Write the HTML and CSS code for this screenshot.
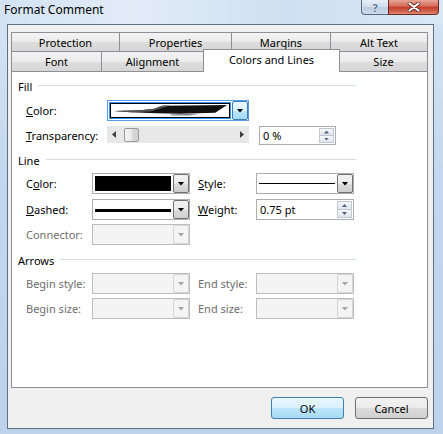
FILE: index.html
```html
<!DOCTYPE html>
<html>
<head>
<meta charset="utf-8">
<title>Format Comment</title>
<link rel="stylesheet" href="styles.css">
</head>
<body>
<div class="window">
  <div class="titlebar">
    <div class="title">Format Comment</div>
    <div class="caption-btns">
      <div class="cap help">?</div>
      <div class="cap close">
        <svg width="14" height="10" viewBox="0 0 14 10"><path d="M2.5 1.5 L11.5 8.5 M11.5 1.5 L2.5 8.5" stroke="#5a1f1a" stroke-width="3.6" stroke-linecap="round"/><path d="M2.5 1.5 L11.5 8.5 M11.5 1.5 L2.5 8.5" stroke="#fff" stroke-width="2.2" stroke-linecap="round"/></svg>
      </div>
    </div>
  </div>

  <div class="client">
    <div class="tabs">
      <div class="tabrow row1">
        <div class="tab t-protection">Protection</div>
        <div class="tab t-properties">Properties</div>
        <div class="tab t-margins">Margins</div>
        <div class="tab t-alttext">Alt Text</div>
      </div>
      <div class="tabrow row2">
        <div class="tab t-font">Font</div>
        <div class="tab t-alignment">Alignment</div>
        <div class="tab t-colors selected">Colors and Lines</div>
        <div class="tab t-size">Size</div>
      </div>
    </div>

    <div class="panel">
      <div class="group g-fill">
        <div class="ghead"><span>Fill</span><i class="rule"></i></div>
        <div class="row r-fcolor">
          <span class="lbl lbl-fill"><u>C</u>olor:</span>
          <div class="combo combo-fill focus">
            <div class="val">
              <div class="swatch">
                <svg width="120" height="14" viewBox="0 0 120 14" preserveAspectRatio="none">
                  <polygon points="3,7.5 30,6.8 44,5 52,2 118,1 106,9.5 70,10.5 46,10 20,9" fill="#111"/>
                  <polygon points="3,7.5 30,6.8 44,5 52,2 60,1.6 40,8 20,9" fill="#555"/>
                  <polygon points="60,11 90,10.5 80,12.5 62,12.5" fill="#888"/>
                </svg>
              </div>
            </div>
            <div class="dd"></div>
          </div>
        </div>
        <div class="row r-trans">
          <span class="lbl lbl-fill"><u>T</u>ransparency:</span>
          <div class="slider">
            <i class="sarrow left"></i>
            <i class="thumb"></i>
            <i class="spacer"></i>
            <i class="sarrow right"></i>
          </div>
          <div class="spin spin-pct">
            <span class="sval">0 %</span>
            <div class="spinbtns"><b class="up"></b><b class="down"></b></div>
          </div>
        </div>
      </div>

      <div class="group g-line">
        <div class="ghead"><span>Line</span><i class="rule"></i></div>
        <div class="row r-lcolor">
          <span class="lbl">C<u>o</u>lor:</span>
          <div class="combo">
            <div class="val"><div class="blackbox"></div></div>
            <div class="dd"></div>
          </div>
          <span class="lbl lbl2"><u>S</u>tyle:</span>
          <div class="combo">
            <div class="val"><div class="stroke thin"></div></div>
            <div class="dd"></div>
          </div>
        </div>
        <div class="row r-dashed">
          <span class="lbl"><u>D</u>ashed:</span>
          <div class="combo">
            <div class="val"><div class="stroke thick"></div></div>
            <div class="dd"></div>
          </div>
          <span class="lbl lbl2"><u>W</u>eight:</span>
          <div class="spin spin-weight">
            <span class="sval">0.75 pt</span>
            <div class="spinbtns"><b class="up"></b><b class="down"></b></div>
          </div>
        </div>
        <div class="row r-connector">
          <span class="lbl disabled">Connector:</span>
          <div class="combo disabled">
            <div class="val"></div>
            <div class="dd"></div>
          </div>
        </div>
      </div>

      <div class="group g-arrows">
        <div class="ghead"><span>Arrows</span><i class="rule"></i></div>
        <div class="row r-bstyle">
          <span class="lbl disabled">Begin style:</span>
          <div class="combo disabled"><div class="val"></div><div class="dd"></div></div>
          <span class="lbl lbl2 disabled">End style:</span>
          <div class="combo disabled"><div class="val"></div><div class="dd"></div></div>
        </div>
        <div class="row r-bsize">
          <span class="lbl disabled">Begin size:</span>
          <div class="combo disabled"><div class="val"></div><div class="dd"></div></div>
          <span class="lbl lbl2 disabled">End size:</span>
          <div class="combo disabled"><div class="val"></div><div class="dd"></div></div>
        </div>
      </div>
    </div>

    <div class="buttons">
      <div class="btn default">OK</div>
      <div class="btn">Cancel</div>
    </div>
  </div>
</div>
</body>
</html>
```

FILE: styles.css
```css
* { box-sizing: border-box; }

html, body {
  margin: 0;
  padding: 0;
}

body {
  width: 443px;
  height: 434px;
  overflow: hidden;
  font-family: "Noto Sans", "Open Sans", sans-serif;
  font-size: 11px;
  color: #111;
  background: linear-gradient(180deg, #d6e5f5 0%, #c3d8ee 40%, #bcd3eb 100%);
}

.window {
  width: 443px;
  height: 434px;
  display: flex;
  flex-direction: column;
}

/* ---------- title bar ---------- */
.titlebar {
  height: 24px;
  flex: none;
  display: flex;
  justify-content: space-between;
  align-items: flex-start;
  background: linear-gradient(90deg, #d3e3f4 0%, #e2ecf7 30%, #cfe0f2 65%, #d9e7f5 100%);
}

.title {
  padding: 2px 0 0 4px;
  font-size: 12px;
  line-height: 16px;
  color: #000;
}

.caption-btns {
  display: flex;
  margin-right: 4px;
}

.cap {
  height: 15px;
  display: flex;
  align-items: center;
  justify-content: center;
  border: 1px solid #5b6b80;
  border-top: none;
}

.help {
  width: 27px;
  border-right: none;
  border-radius: 0 0 0 4px;
  background: linear-gradient(180deg, #e6eef8 0%, #d2deec 50%, #bccde2 51%, #cbdaeb 100%);
  color: #5f7591;
  font-weight: bold;
  font-size: 11px;
  text-shadow: 0 0 2px #fff;
}

.close {
  width: 51px;
  border-color: #6a2a24;
  border-radius: 0 0 4px 0;
  background: linear-gradient(180deg, #e8a598 0%, #d66a5a 45%, #c43c2c 50%, #d0604c 80%, #e08d78 100%);
}

/* ---------- client area ---------- */
.client {
  flex: 1;
  margin: 0 9px 5px 7px;
  border: 1px solid #5f7086;
  background: #f0f0f0;
  padding: 7px 0 0 3px;
  display: flex;
  flex-direction: column;
}

/* ---------- tabs ---------- */
.tabs {
  width: 417px;
  height: 39px;
  display: flex;
  flex-direction: column;
}

.tabrow {
  display: flex;
  align-items: flex-end;
}

.row1 { height: 19px; }
.row2 { height: 20px; }

.tab {
  height: 100%;
  border: 1px solid #8e9095;
  border-bottom: none;
  background: linear-gradient(180deg, #f3f3f3 0%, #ebebeb 50%, #dddddd 51%, #d6d6d6 100%);
  display: flex;
  align-items: center;
  justify-content: center;
  color: #000;
  margin-left: -1px;
}

.tab:first-child { margin-left: 0; }

.t-protection { width: 109px; }
.t-properties { width: 113px; }
.t-margins { width: 100px; }
.t-alttext { width: 98px; }

.t-font { width: 91px; }
.t-alignment { width: 103px; }
.t-colors { width: 137px; }
.t-size { width: 89px; }

.tab.selected {
  height: 23px;
  margin-bottom: -1px;
  background: #fff;
  position: relative;
  z-index: 2;
  padding-bottom: 3px;
}

/* ---------- panel ---------- */
.panel {
  width: 417px;
  height: 317px;
  flex: none;
  border: 1px solid #8e9095;
  background: #fff;
  padding: 8px 0 0 6px;
}

.ghead {
  width: 338px;
  height: 13px;
  display: flex;
  align-items: center;
  line-height: 13px;
  color: #000;
}

.ghead .rule {
  flex: 1;
  height: 1px;
  margin: 0 0 0 6px;
  background: #d5dfe5;
  position: relative;
  top: -1px;
}

.row {
  display: flex;
  align-items: center;
  padding-left: 8px;
}

.lbl {
  width: 66px;
  flex: none;
  color: #000;
  white-space: nowrap;
}

.lbl u { text-decoration: underline; text-underline-offset: 1px; }

.lbl-fill { width: 81px; }
.lbl2 { width: 58px; margin-left: 8px; }

.lbl.disabled { color: #6d6d6d; }

/* vertical rhythm */
.r-fcolor { margin-top: 7px; height: 21px; }
.r-trans { margin-top: 5px; height: 19px; }
.g-line .ghead { margin-top: 9px; }
.r-lcolor { margin-top: 6px; height: 21px; }
.r-dashed { margin-top: 5px; height: 21px; }
.r-connector { margin-top: 4px; height: 21px; }
.g-arrows .ghead { margin-top: 9px; }
.r-bstyle { margin-top: 6px; height: 21px; }
.r-bsize { margin-top: 4px; height: 21px; }

/* ---------- combo boxes ---------- */
.combo {
  width: 98px;
  height: 21px;
  flex: none;
  border: 1px solid #abadb3;
  background: #fff;
  padding: 1px 0 1px 1px;
  display: flex;
}

.combo .val {
  flex: 1;
  display: flex;
  align-items: center;
  padding: 1px 2px 1px 1px;
}

.combo .dd {
  width: 16px;
  flex: none;
  margin: -1px 0;
  border: 1px solid #707070;
  border-radius: 2px;
  background: linear-gradient(180deg, #f2f2f2 0%, #ebebeb 50%, #dddddd 51%, #cfcfcf 100%);
  display: flex;
  align-items: center;
  justify-content: center;
}

.combo .dd::after {
  content: "";
  width: 7px;
  height: 4px;
  background: #000;
  clip-path: polygon(0 0, 100% 0, 50% 100%);
}

.blackbox {
  width: 100%;
  height: 15px;
  background: #000;
}

.stroke {
  width: 100%;
  background: #000;
}

.stroke.thin { height: 1px; }
.stroke.thick { height: 3px; margin-top: 1px; }

.combo-fill {
  width: 142px;
  border-color: #569de5;
}

.combo-fill .val {
  background: #3399ff;
  padding: 1px;
  margin-right: 1px;
}

.swatch {
  width: 100%;
  height: 100%;
  border: 1px solid #000;
  background: #fff;
  display: flex;
}

.swatch svg {
  width: 100%;
  height: 100%;
}

.combo.focus .dd {
  border-color: #3c7fb1;
  background: linear-gradient(180deg, #eaf6fd 0%, #d9f0fc 50%, #bee6fd 51%, #a7d9f5 100%);
}

.combo.disabled {
  border-color: #bdbdbd;
  background: #f4f4f4;
}

.combo.disabled .dd {
  border-color: #d4d4d4;
  background: #f4f4f4;
}

.combo.disabled .dd::after { background: #a6a6a6; }

/* ---------- slider ---------- */
.slider {
  width: 142px;
  height: 17px;
  flex: none;
  margin-top: -2px;
  background: #e8e8e8;
  display: flex;
  align-items: center;
  padding: 0 5px;
}

.sarrow {
  width: 4px;
  height: 7px;
  background: #404040;
  flex: none;
}

.sarrow.left { clip-path: polygon(100% 0, 100% 100%, 0 50%); }
.sarrow.right { clip-path: polygon(0 0, 0 100%, 100% 50%); }

.thumb {
  width: 15px;
  height: 14px;
  margin-left: 8px;
  flex: none;
  border: 1px solid #989898;
  border-radius: 2px;
  background: linear-gradient(90deg, #f6f6f6 0%, #e9e9e9 50%, #d9d9d9 51%, #d2d2d2 100%);
}

.spacer { flex: 1; }

/* ---------- spin boxes ---------- */
.spin {
  height: 19px;
  flex: none;
  border: 1px solid #abadb3;
  background: #fff;
  display: flex;
  padding: 1px;
}

.spin-pct { width: 77px; margin-left: 10px; }
.spin-weight { width: 98px; height: 21px; }

.sval {
  flex: 1;
  padding-left: 2px;
  display: flex;
  align-items: center;
  color: #000;
}

.spinbtns {
  width: 15px;
  display: flex;
  flex-direction: column;
}

.spinbtns b {
  flex: 1;
  border: 1px solid #c1c8d2;
  background: linear-gradient(180deg, #f5f7fa 0%, #dfe5ec 100%);
  display: flex;
  align-items: center;
  justify-content: center;
}

.spinbtns b + b { margin-top: -1px; }

.spinbtns b::after {
  content: "";
  width: 5px;
  height: 3px;
  background: #4d6185;
}

.spinbtns .up::after { clip-path: polygon(50% 0, 100% 100%, 0 100%); }
.spinbtns .down::after { clip-path: polygon(0 0, 100% 0, 50% 100%); }

/* ---------- buttons ---------- */
.buttons {
  width: 417px;
  margin-top: 9px;
  display: flex;
  justify-content: flex-end;
  gap: 11px;
}

.btn {
  width: 73px;
  height: 22px;
  border: 1px solid #707070;
  border-radius: 3px;
  background: linear-gradient(180deg, #f2f2f2 0%, #ebebeb 50%, #dddddd 51%, #cfcfcf 100%);
  display: flex;
  align-items: center;
  justify-content: center;
  color: #000;
}

.btn.default {
  border-color: #3c7fb1;
  background: linear-gradient(180deg, #eaf6fd 0%, #d9f0fc 50%, #bee6fd 51%, #a7d9f5 100%);
}
```
